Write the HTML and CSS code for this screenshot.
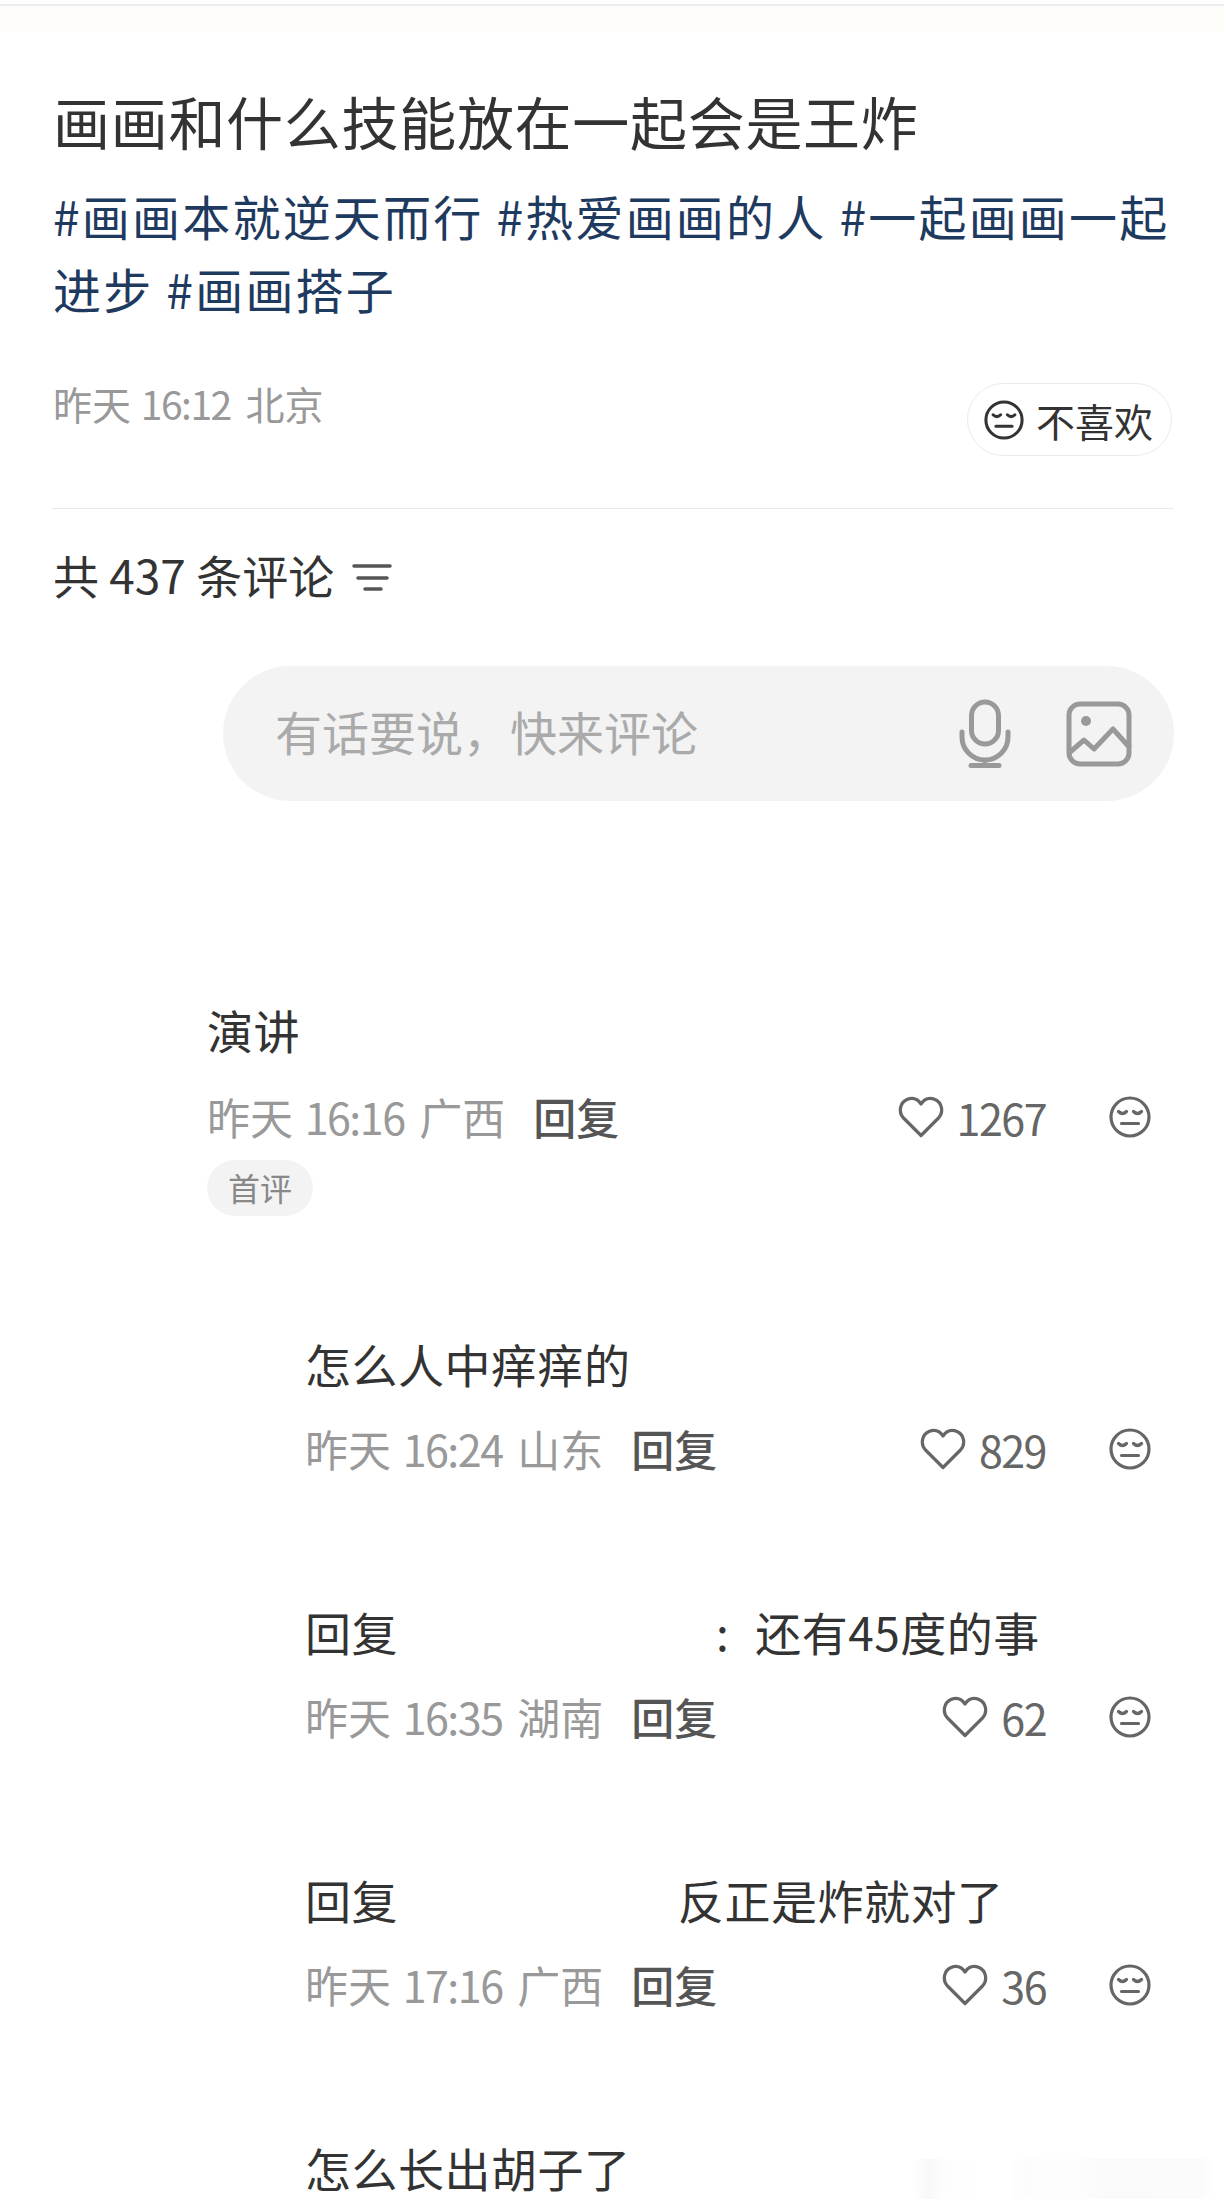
FILE: index.html
```html
<!DOCTYPE html>
<html lang="zh-CN">
<head>
  <meta charset="UTF-8">
  <meta name="viewport" content="width=device-width, initial-scale=1.0">
  <title>画画和什么技能放在一起会是王炸</title>
  <link rel="stylesheet" href="styles.css">
</head>
<body>
  <svg class="defs" width="0" height="0" aria-hidden="true">
    <symbol id="face" viewBox="0 0 42 42">
      <circle cx="21" cy="21" r="19" fill="none" stroke="currentColor" stroke-width="3.200"/>
      <path d="M9.500 15.500q4 4 8 0M24.500 15.500q4 4 8 0M12.500 27.500h17" fill="none" stroke="currentColor" stroke-width="3.200" stroke-linecap="round"/>
    </symbol>
    <symbol id="heart" viewBox="0 0 46 42">
      <path d="M23 39.500 5.500 22C0 16 2 6.500 9 3.500 15 1 20 3.500 23 8c3-4.500 8-7 14-4.500 7 3 9 12.500 3.500 18.500Z" fill="none" stroke="currentColor" stroke-width="3.200" stroke-linejoin="round"/>
    </symbol>
  </svg>

  <div class="top-band"></div>

  <div class="page">
    <h1 class="title">画画和什么技能放在一起会是王炸</h1>
    <p class="tags">#画画本就逆天而行 #热爱画画的人 #一起画画一起进步 #画画搭子</p>

    <div class="post-info">
      <span class="post-time">昨天 <span class="num">16:12</span> 北京</span>
      <span class="dislike-btn">
        <svg class="face-big"><use href="#face"/></svg>
        不喜欢
      </span>
    </div>

    <div class="divider"></div>

    <div class="count-row">
      <span class="count">共 437 条评论</span>
      <svg class="sort-icon" width="40" height="28" viewBox="0 0 40 28">
        <path d="M2 3h36M6 15h29M13 26h16" fill="none" stroke="#555" stroke-width="3.500" stroke-linecap="round"/>
      </svg>
    </div>

    <div class="comment-input">
      <span class="placeholder">有话要说，快来评论</span>
      <svg class="mic-icon" width="54" height="70" viewBox="0 0 54 70">
        <rect x="13.500" y="3" width="27" height="42" rx="13.500" fill="none" stroke="#999" stroke-width="5"/>
        <path d="M4 33v5a23 23 0 0 0 46 0v-5M27 61v5M13 66.500h28" fill="none" stroke="#999" stroke-width="5" stroke-linecap="round"/>
      </svg>
      <svg class="pic-icon" width="66" height="66" viewBox="0 0 66 66">
        <rect x="3" y="3" width="60" height="60" rx="11" fill="none" stroke="#999" stroke-width="5"/>
        <circle cx="20" cy="20" r="5" fill="#999"/>
        <path d="M3 52 18 39l10 9 19-20 17 19" fill="none" stroke="#999" stroke-width="5" stroke-linejoin="round"/>
      </svg>
    </div>

    <div class="comments">
      <div class="comment first">
        <div class="comment-text">演讲</div>
        <div class="comment-meta">
          <span class="when">昨天 <span class="num">16:16</span> 广西</span>
          <span class="reply">回复</span>
          <span class="like"><svg class="heart"><use href="#heart"/></svg>1267</span>
          <svg class="face"><use href="#face"/></svg>
        </div>
        <span class="badge">首评</span>
      </div>

      <div class="comment">
        <div class="comment-text">怎么人中痒痒的</div>
        <div class="comment-meta">
          <span class="when">昨天 <span class="num">16:24</span> 山东</span>
          <span class="reply">回复</span>
          <span class="like"><svg class="heart"><use href="#heart"/></svg>829</span>
          <svg class="face"><use href="#face"/></svg>
        </div>
      </div>

      <div class="comment">
        <div class="comment-text">回复<span class="hidden-name long"></span>:<span class="after-colon">还有45度的事</span></div>
        <div class="comment-meta">
          <span class="when">昨天 <span class="num">16:35</span> 湖南</span>
          <span class="reply">回复</span>
          <span class="like"><svg class="heart"><use href="#heart"/></svg>62</span>
          <svg class="face"><use href="#face"/></svg>
        </div>
      </div>

      <div class="comment">
        <div class="comment-text">回复<span class="hidden-name"></span>反正是炸就对了</div>
        <div class="comment-meta">
          <span class="when">昨天 <span class="num">17:16</span> 广西</span>
          <span class="reply">回复</span>
          <span class="like"><svg class="heart"><use href="#heart"/></svg>36</span>
          <svg class="face"><use href="#face"/></svg>
        </div>
      </div>

      <div class="comment last">
        <div class="comment-text">怎么长出胡子了</div>
        <div class="smudge"></div>
      </div>
    </div>
  </div>
</body>
</html>
```

FILE: styles.css
```css
html, body {
  margin: 0;
  padding: 0;
  height: 2212px;
  overflow: hidden;
}
body {
  background-color: #fff;
  color: #333;
  font-family: "Noto Sans CJK SC", "Noto Sans", sans-serif;
}
.defs {
  display: block;
  height: 0;
}
.top-band {
  height: 28px;
  margin-top: 4px;
  border-top: 2px solid #ececec;
  background-color: #fffdf9;
  box-sizing: border-box;
}
.page {
  padding: 0 50px 0 53px;
}
.title {
  margin: 53px 0 0;
  font-size: 57px;
  font-weight: 400;
  line-height: 70px;
  letter-spacing: 0.700px;
  color: #333;
}
.tags {
  margin: 24px 0 0;
  font-size: 48px;
  line-height: 73px;
  letter-spacing: 2.200px;
  color: #1f3a5f;
}
.post-info {
  display: flex;
  justify-content: space-between;
  align-items: flex-start;
  margin-top: 55px;
}
.post-time {
  font-size: 39px;
  line-height: 50px;
  color: #999;
  margin-top: -2px;
}
.post-time .num {
  margin: 0 6px 0 1px;
}
.num {
  letter-spacing: -1.500px;
  margin-right: 3px;
}
.dislike-btn {
  display: flex;
  align-items: center;
  gap: 12px;
  box-sizing: border-box;
  height: 73px;
  margin: 3px 2px 0 0;
  padding: 0 18px 0 16px;
  border: 1.500px solid #eaeaea;
  border-radius: 37px;
  font-size: 39px;
  color: #333;
}
.face-big {
  width: 40px;
  height: 40px;
  color: #333;
}
.divider {
  height: 1px;
  margin: 52px 0 0 -1px;
  background-color: #e9e9e9;
}
.count-row {
  display: flex;
  align-items: center;
  gap: 18px;
  margin-top: 36px;
  height: 60px;
}
.count {
  font-size: 46px;
  line-height: 58px;
  padding-bottom: 2px;
  color: #333;
}
.sort-icon {
  margin-top: 4px;
}
.comment-input {
  display: flex;
  align-items: center;
  height: 135px;
  margin: 61px 0 0 170px;
  padding: 0 42px 0 52px;
  border-radius: 68px;
  background-color: #f3f3f3;
}
.placeholder {
  flex: 1;
  font-size: 47px;
  line-height: 60px;
  padding-bottom: 6px;
  color: #aaa;
}
.mic-icon {
  margin-right: 54px;
}
.comments {
  display: flex;
  flex-direction: column;
  gap: 129px;
  margin-top: 200px;
}
.comment {
  padding-left: 252px;
}
.comment.first {
  padding-left: 154px;
  margin-bottom: -10px;
}
.comment.first .comment-meta {
  margin-top: 31px;
}
.comment.last {
  display: flex;
  align-items: flex-end;
  justify-content: space-between;
  margin-right: -38px;
}
.comment-text {
  font-size: 46px;
  line-height: 56px;
  padding-bottom: 4px;
  letter-spacing: 0.500px;
  color: #333;
}
.hidden-name {
  display: inline-block;
  width: 280px;
}
.hidden-name.long {
  width: 318px;
}
.after-colon {
  margin-left: 26px;
}
.comment-meta {
  display: flex;
  align-items: center;
  gap: 28px;
  margin-top: 29px;
  padding-right: 23px;
  height: 50px;
  font-size: 43px;
  word-spacing: 2px;
  color: #999;
}
.when {
  line-height: 48px;
  padding-bottom: 2px;
}
.reply {
  color: #555;
  font-weight: 500;
  line-height: 48px;
  padding-bottom: 2px;
}
.like {
  display: flex;
  align-items: center;
  gap: 13px;
  margin-left: auto;
  color: #666;
  letter-spacing: -1.500px;
}
.heart {
  width: 46px;
  height: 42px;
  color: #666;
}
.face {
  width: 42px;
  height: 42px;
  margin-left: 35px;
  color: #666;
}
.badge {
  display: inline-block;
  margin-top: 18px;
  padding: 0 21px;
  height: 56px;
  border-radius: 28px;
  background-color: #f3f3f3;
  font-size: 32px;
  line-height: 54px;
  color: #888;
}
.smudge {
  width: 300px;
  height: 40px;
  background: linear-gradient(90deg, #fff 0, #f8f8f8 18px, #fdfdfd 30px, #fff 70px, #fff 96px, #fcfcfc 110px, #fdfdfd 160px, #fafafa 200px, #fbfbfb 290px, #fff 300px);
}
```
